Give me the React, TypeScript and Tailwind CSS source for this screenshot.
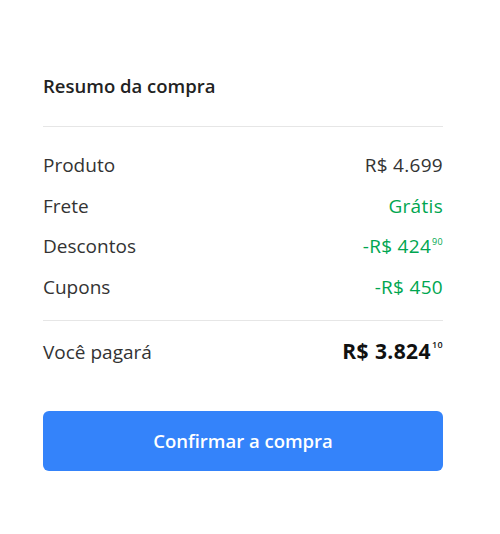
import React from 'react';

type Row = { label: string; value: string; cents?: string; green?: boolean };

const rows: Row[] = [
  { label: 'Produto', value: 'R$ 4.699' },
  { label: 'Frete', value: 'Grátis', green: true },
  { label: 'Descontos', value: '-R$ 424', cents: '90', green: true },
  { label: 'Cupons', value: '-R$ 450', green: true },
];

const App: React.FC = () => {
  return (
    <div
      className="w-[500px] h-[534px] bg-white text-[#333333]"
      style={{ fontFamily: '"Open Sans", "Liberation Sans", sans-serif' }}
    >
      <div className="ml-[43px] w-[400px] pt-[74px] flex flex-col">
        <h2 className="text-[18.5px] leading-[24px] font-semibold text-[#222222]">Resumo da compra</h2>
        <div className="mt-[28px] h-px bg-[#e6e6e6]" />

        <div className="flex flex-col pt-[18px]">
          {rows.map((row) => (
            <div key={row.label} className="flex justify-between items-center h-[40.5px] text-[19px] leading-[24px]">
              <span>{row.label}</span>
              <span className={row.green ? 'text-[#00a650] tracking-[0.3px]' : 'text-[#333333] tracking-[0.3px]'}>
                {row.value}
                {row.cents && <sup className="text-[9px] ml-px top-[-0.9em]">{row.cents}</sup>}
              </span>
            </div>
          ))}
        </div>

        <div className="mt-[13px] h-px bg-[#e6e6e6]" />

        <div className="flex justify-between items-center mt-[19px] h-[24px]">
          <span className="text-[19px]">Você pagará</span>
          <span className="text-[21px] font-bold text-[#111111] tracking-[0.4px]">
            R$ 3.824
            <sup className="text-[9px] font-semibold ml-px top-[-1.2em]">10</sup>
          </span>
        </div>

        <button className="mt-[47px] h-[60px] w-full rounded-[6px] bg-[#3483fa] text-white text-[18.5px] font-semibold">
          Confirmar a compra
        </button>
      </div>
    </div>
  );
};

export default App;
